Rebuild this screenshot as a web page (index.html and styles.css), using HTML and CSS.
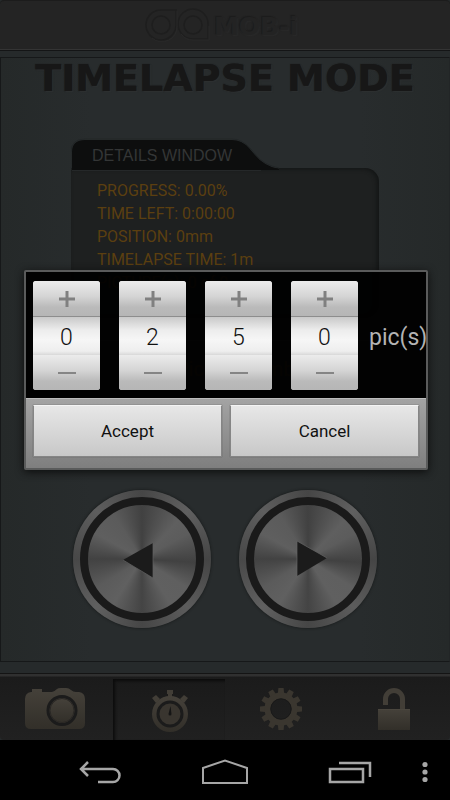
FILE: index.html
```html
<!DOCTYPE html>
<html lang="en">
<head>
<meta charset="utf-8">
<meta name="viewport" content="width=device-width, initial-scale=1">
<title>MOB-i Timelapse</title>
<link rel="stylesheet" href="styles.css">
</head>
<body>
<div class="screen">
  <div class="app">
    <header class="brand">
      <svg class="brand-mark" width="66" height="34" viewBox="0 0 66 34" aria-hidden="true">
        <g fill="none" stroke="#1e1e1e" stroke-width="1.5">
          <path d="M32 2H17A15 15 0 1 0 32 17Z"/><circle cx="17" cy="17" r="9"/>
          <path d="M64 31H49A15 15 0 1 1 64 17Z"/><circle cx="49" cy="17" r="9"/>
        </g>
        <g fill="none" stroke="#292929">
          <path d="M33 3V18A15 15 0 0 1 8 30M65 18V32H49A15 15 0 0 1 37 26"/>
        </g>
      </svg>
      <span class="brand-name">MOB-i</span>
    </header>
    <main class="panel">
      <h1 class="title">TIMELAPSE MODE</h1>
      <section class="details">
        <svg class="details-tab" width="210" height="34" viewBox="0 0 210 34" aria-hidden="true">
          <path d="M1 32V14Q1 2 14 2H161Q171 2 178 10L184 17Q193 28 208 31V32Z" fill="#0d0e0e"/>
          <path d="M0 32V14Q0 1 14 1H161Q171 1 179 10L185 17Q193 27 208 30" fill="none" stroke="#222627"/>
          <path d="M1 32.500H190" stroke="#252829"/>
        </svg>
        <h2 class="details-title">DETAILS WINDOW</h2>
        <div class="details-body">
          <p>PROGRESS: 0.00%</p>
          <p>TIME LEFT: 0:00:00</p>
          <p>POSITION: 0mm</p>
          <p>TIMELAPSE TIME: 1m</p>
          <p>PICTURE(s): 0 of 0</p>
        </div>
      </section>
      <p class="setting">Picture number</p>
      <div class="jog">
        <button class="jog-button" type="button" aria-label="Move left">
          <svg width="108" height="108" viewBox="0 0 108 108" aria-hidden="true"><path d="M35 55L65 38V73Z" fill="#1b1b1b"/><path d="M35 55L65 73V38" fill="none" stroke="#626262" stroke-width=".7"/></svg>
        </button>
        <button class="jog-button" type="button" aria-label="Move right">
          <svg width="108" height="108" viewBox="0 0 108 108" aria-hidden="true"><path d="M43 36V71L73 53Z" fill="#1b1b1b"/><path d="M43 71V36L73 53" fill="none" stroke="#666" stroke-width=".7"/></svg>
        </button>
      </div>
    </main>
    <nav class="tabs">
      <button class="tab" type="button" aria-label="Camera">
        <svg width="62" height="44" viewBox="0 0 62 44" aria-hidden="true">
          <defs><linearGradient id="metal" x1="0" y1="0" x2="0" y2="1"><stop offset="0" stop-color="#45413a"/><stop offset="1" stop-color="#322f29"/></linearGradient></defs>
          <path d="M1 12Q1 6 7 5H8V2H18V5H28Q30 5 33 2Q34 1 37 1H42Q45 1 47 3Q49 5 52 5H55Q61 6 61 12V36Q61 42 55 42H7Q1 42 1 36Z" fill="url(#metal)"/>
          <circle cx="38" cy="23.500" r="14" fill="#39352f" stroke="#1b1b1b" stroke-width="3"/>
          <circle cx="38" cy="23.500" r="12" fill="url(#metal)" stroke="#292724"/>
        </svg>
      </button>
      <button class="tab tab-active" type="button" aria-label="Timelapse">
        <svg width="38" height="44" viewBox="0 0 38 44" aria-hidden="true">
          <path d="M16 1H22V5H21V8H17V5H16Z M1 9L5 6L9 10L5 14Z M37 9L33 6L29 10L33 14Z" fill="#423e37"/>
          <circle cx="19" cy="25" r="18" fill="url(#metal)"/>
          <circle cx="19" cy="25" r="12" fill="#39352f" stroke="#1b1b1b" stroke-width="3"/>
          <path d="M19.500 17L17.500 25A1.500 1.500 0 1 0 20.500 25Z" fill="#151515"/>
        </svg>
      </button>
      <button class="tab" type="button" aria-label="Settings">
        <svg width="42" height="44" viewBox="-21 -22 42 44" aria-hidden="true">
          <g fill="#3a362f">
            <path id="tooth" d="M-3.300 -14L-2.600 -21H2.600L3.300 -14Z"/>
            <use href="#tooth" transform="rotate(30)"/><use href="#tooth" transform="rotate(60)"/><use href="#tooth" transform="rotate(90)"/><use href="#tooth" transform="rotate(120)"/><use href="#tooth" transform="rotate(150)"/><use href="#tooth" transform="rotate(180)"/><use href="#tooth" transform="rotate(210)"/><use href="#tooth" transform="rotate(240)"/><use href="#tooth" transform="rotate(270)"/><use href="#tooth" transform="rotate(300)"/><use href="#tooth" transform="rotate(330)"/>
          </g>
          <circle r="13.500" fill="none" stroke="#3a362f" stroke-width="6"/>
          <circle r="10.200" fill="none" stroke="#191919"/>
        </svg>
      </button>
      <button class="tab" type="button" aria-label="Unlock">
        <svg width="34" height="44" viewBox="0 0 34 44" aria-hidden="true">
          <path d="M8.500 18V12A8.500 8.500 0 0 1 25.500 12V24" fill="none" stroke="#423e37" stroke-width="5"/>
          <path d="M1 22H33V43H1Z" fill="url(#metal)"/>
          <path d="M1 22.500H33" stroke="#4a463e"/>
        </svg>
      </button>
    </nav>
    <form class="dialog" role="dialog" aria-label="Number of pictures">
      <div class="pickers">
        <div class="picker">
          <button class="step" type="button" aria-label="Increase thousands"><svg width="18" height="18" viewBox="0 0 18 18"><path d="M9 1V17M1 9H17" stroke="#808080" stroke-width="3"/></svg></button>
          <input class="digit" type="text" value="0" aria-label="Thousands">
          <button class="step" type="button" aria-label="Decrease thousands"><svg width="18" height="18" viewBox="0 0 18 18"><path d="M0 9H18" stroke="#858585" stroke-width="2"/></svg></button>
        </div>
        <div class="picker">
          <button class="step" type="button" aria-label="Increase hundreds"><svg width="18" height="18" viewBox="0 0 18 18"><path d="M9 1V17M1 9H17" stroke="#808080" stroke-width="3"/></svg></button>
          <input class="digit" type="text" value="2" aria-label="Hundreds">
          <button class="step" type="button" aria-label="Decrease hundreds"><svg width="18" height="18" viewBox="0 0 18 18"><path d="M0 9H18" stroke="#858585" stroke-width="2"/></svg></button>
        </div>
        <div class="picker">
          <button class="step" type="button" aria-label="Increase tens"><svg width="18" height="18" viewBox="0 0 18 18"><path d="M9 1V17M1 9H17" stroke="#808080" stroke-width="3"/></svg></button>
          <input class="digit" type="text" value="5" aria-label="Tens">
          <button class="step" type="button" aria-label="Decrease tens"><svg width="18" height="18" viewBox="0 0 18 18"><path d="M0 9H18" stroke="#858585" stroke-width="2"/></svg></button>
        </div>
        <div class="picker">
          <button class="step" type="button" aria-label="Increase units"><svg width="18" height="18" viewBox="0 0 18 18"><path d="M9 1V17M1 9H17" stroke="#808080" stroke-width="3"/></svg></button>
          <input class="digit" type="text" value="0" aria-label="Units">
          <button class="step" type="button" aria-label="Decrease units"><svg width="18" height="18" viewBox="0 0 18 18"><path d="M0 9H18" stroke="#858585" stroke-width="2"/></svg></button>
        </div>
        <span class="unit">pic(s)</span>
      </div>
      <div class="actions">
        <button class="action" type="button">Accept</button>
        <button class="action" type="button">Cancel</button>
      </div>
    </form>
  </div>
  <nav class="system">
    <button class="key" type="button" aria-label="Back"><svg width="44" height="24" viewBox="0 0 44 24" fill="none" stroke="#a6a6a6" stroke-width="2.500"><path d="M10 2L3 9L10 16M3 9H35A6 6 0 0 1 35 22H20"/></svg></button>
    <button class="key" type="button" aria-label="Home"><svg width="48" height="26" viewBox="0 0 48 26" fill="none" stroke="#a6a6a6" stroke-width="2"><path d="M2 24V9L24 1.500L46 9V24Z"/></svg></button>
    <button class="key" type="button" aria-label="Recent apps"><svg width="44" height="24" viewBox="0 0 44 24" fill="none" stroke="#a6a6a6" stroke-width="2.500"><path d="M2 9H35V22H2ZM11 3H42V17"/></svg></button>
    <button class="key key-menu" type="button" aria-label="Menu"><svg width="6" height="22" viewBox="0 0 6 22" fill="#a6a6a6"><circle cx="3" cy="3.500" r="2.600"/><circle cx="3" cy="11" r="2.600"/><circle cx="3" cy="18.500" r="2.600"/></svg></button>
  </nav>
</div>
</body>
</html>
```
FILE: styles.css
```css
* { box-sizing: border-box; }

body {
  margin: 0;
  background: #000;
  font-family: Roboto, "Liberation Sans", sans-serif;
}

h1, h2, p { margin: 0; }

button, input {
  margin: 0;
  padding: 0;
  border: 0;
  border-radius: 0;
  background: none;
  font: inherit;
  color: inherit;
}

svg { display: block; }

.screen {
  display: flex;
  flex-direction: column;
  min-height: 100vh;
}

.app {
  position: relative;
  flex: 1;
  display: flex;
  flex-direction: column;
  background: #262a2b;
}

.brand {
  display: flex;
  justify-content: center;
  align-items: center;
  height: 50px;
  padding-right: 8px;
  border-bottom: 1px solid #343434;
  border-top: 1px solid #1c1c1c;
  border-radius: 4px 4px 0 0;
  background: #242424;
  box-shadow: 0 1px #141516;
}

.brand-name {
  padding: 4px 0 0 4px;
  font: bold 25px/30px "DejaVu Sans", sans-serif;
  color: #232323;
  text-shadow: -1px -1px 1px #1c1c1c, 1px 1px 1px #292929;
}

.panel {
  flex: 1;
  display: flex;
  flex-direction: column;
  align-items: center;
  margin: 7px 0 11px;
  border: 1px solid #161819;
  border-right-color: #222526;
  background: linear-gradient(90deg, #252929, #282c2d 20%, #282c2d 80%, #252929);
}

.title {
  font: bold 38px/40px "DejaVu Sans", sans-serif;
  color: #171717;
  white-space: nowrap;
  text-shadow: 0 0 1px #171717, 1px 1px 1px #303334;
}

.details {
  position: relative;
  width: 308px;
  margin-top: 40px;
}

.details-tab {
  position: absolute;
  top: 0;
  left: 0;
}

.details-title {
  position: relative;
  padding: 6px 0 0 21px;
  font: 16px/24px "Liberation Sans", sans-serif;
  color: #343636;
}

.details-body {
  height: 150px;
  padding: 11px 26px;
  border-radius: 0 14px 14px 14px;
  background: #1e2020;
  box-shadow: inset -2px 1px 4px #131515, 0 0 1px #303536;
  font-size: 16px;
  line-height: 23px;
  color: #5b3f10;
}

.setting {
  width: 308px;
  margin-top: 22px;
  padding: 16px 0 0 105px;
  border-top: 1px solid #343839;
  font-size: 20px;
  line-height: 24px;
  color: #5b3f10;
}

.jog {
  display: flex;
  gap: 28px;
  margin-top: 109px;
}

.jog-button {
  display: flex;
  width: 138px;
  height: 138px;
  padding: 7px;
  border-radius: 50%;
  background: conic-gradient(#464646, #606060 12%, #454545 25%, #5c5c5c 38%, #464646 50%, #606060 62%, #484848 75%, #5e5e5e 88%, #464646);
  box-shadow: 0 0 3px #141616;
}

.jog-button svg {
  border: 8px solid #1a1a1a;
  border-radius: 50%;
  box-sizing: content-box;
  background: conic-gradient(#414141, #5f5f5f 12%, #5c5c5c 17%, #414141 26%, #5f5f5f 34%, #606060 41%, #444 50%, #606060 59%, #5b5b5b 66%, #424242 75%, #5f5f5f 83%, #5b5b5b 91%, #414141);
}

.tabs {
  display: grid;
  grid-template-columns: repeat(4, 1fr);
  height: 67px;
  border-top: 1px solid #141414;
  border-radius: 0 0 4px 4px;
  background: linear-gradient(#303030, #303030 2px, #1b1b1b 3px, #212121);
}

.tab {
  display: flex;
  justify-content: center;
  align-items: center;
  padding-top: 3px;
}

.tab:first-child {
  padding-right: 3px;
}

.tab-active {
  margin-top: 5px;
  padding: 3px 0 0 3px;
  background: linear-gradient(#1a1a1a, #202020);
  box-shadow: inset 2px 2px 3px #0c0c0c;
}

.dialog {
  position: absolute;
  top: 50%;
  left: 24px;
  right: 22px;
  transform: translateY(-50%);
  border: 2px solid #5a5b5b;
  border-radius: 2px;
  box-shadow: 0 2px 8px #0c0d0d;
}

.pickers {
  display: flex;
  gap: 19px;
  padding: 9px 0 8px 7px;
  background: rgb(0 0 0 / 94%);
}

.picker {
  display: flex;
  flex-direction: column;
  flex: 0 0 67px;
  border-radius: 3px;
  overflow: hidden;
  background: #ddd;
}

.step {
  display: flex;
  justify-content: center;
  align-items: center;
  height: 35px;
  background: linear-gradient(#ececec, #d4d4d4 45%, #bababa 75%, #b6b6b6);
}

.digit {
  width: 100%;
  height: 39px;
  padding-top: 2px;
  border-top: 1px solid #8d8d8d;
  background: linear-gradient(#c9c9c9, #ededed 35%, #f6f6f6 60%, #eee 90%, #d8d8d8);
  font-size: 23px;
  font-weight: 300;
  line-height: 36px;
  text-align: center;
  color: #111;
}

.unit {
  align-self: center;
  margin-left: -8px;
  padding-top: 4px;
  font-size: 23px;
  line-height: 28px;
  color: #b3b3b3;
}

.actions {
  display: grid;
  grid-template-columns: 1fr 1fr;
  gap: 8px;
  padding: 6px 7px 11px;
  border-top: 1px solid #bdbdbd;
  background: linear-gradient(#a3a3a3, #7f7f7f);
}

.action {
  height: 52px;
  border: 1px solid #858585;
  border-top-color: #f4f4f4;
  background: linear-gradient(#e7e7e7, #c8c8c8);
  box-shadow: 0 0 1px #555;
  font-size: 17px;
  color: #111;
}

.system {
  display: grid;
  grid-template-columns: repeat(3, 1fr) 37px;
  align-items: center;
  height: 60px;
  padding: 4px 0 0 37px;
  background: #000;
}

.key {
  display: flex;
  justify-content: center;
}

.key-menu {
  justify-content: flex-start;
  padding-left: 9px;
}
```
